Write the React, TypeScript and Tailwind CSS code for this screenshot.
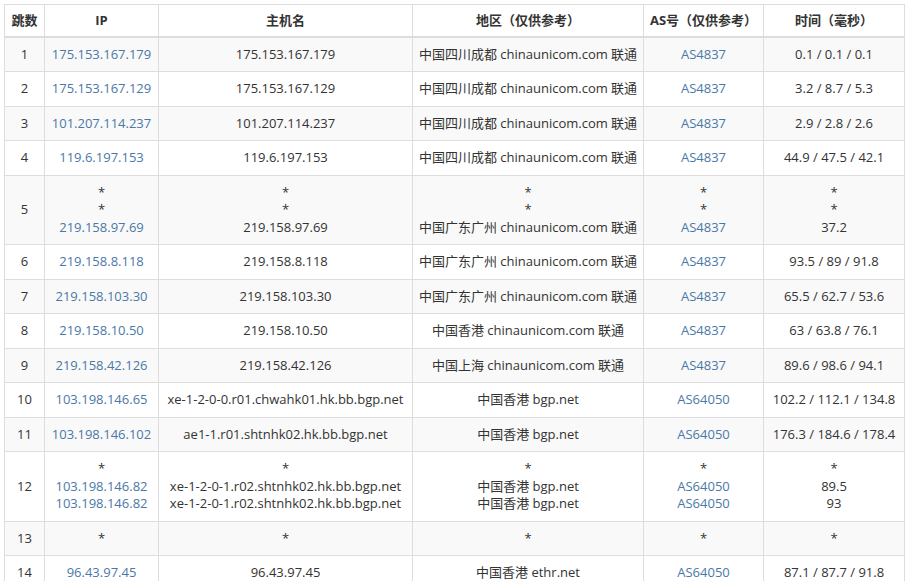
const rows: [string, string[], string[], string[], string[], string[]][] = [
  ["1", ["175.153.167.179"], ["175.153.167.179"], ["中国四川成都 chinaunicom.com 联通"], ["AS4837"], ["0.1 / 0.1 / 0.1"]],
  ["2", ["175.153.167.129"], ["175.153.167.129"], ["中国四川成都 chinaunicom.com 联通"], ["AS4837"], ["3.2 / 8.7 / 5.3"]],
  ["3", ["101.207.114.237"], ["101.207.114.237"], ["中国四川成都 chinaunicom.com 联通"], ["AS4837"], ["2.9 / 2.8 / 2.6"]],
  ["4", ["119.6.197.153"], ["119.6.197.153"], ["中国四川成都 chinaunicom.com 联通"], ["AS4837"], ["44.9 / 47.5 / 42.1"]],
  ["5", ["*", "*", "219.158.97.69"], ["*", "*", "219.158.97.69"], ["*", "*", "中国广东广州 chinaunicom.com 联通"], ["*", "*", "AS4837"], ["*", "*", "37.2"]],
  ["6", ["219.158.8.118"], ["219.158.8.118"], ["中国广东广州 chinaunicom.com 联通"], ["AS4837"], ["93.5 / 89 / 91.8"]],
  ["7", ["219.158.103.30"], ["219.158.103.30"], ["中国广东广州 chinaunicom.com 联通"], ["AS4837"], ["65.5 / 62.7 / 53.6"]],
  ["8", ["219.158.10.50"], ["219.158.10.50"], ["中国香港 chinaunicom.com 联通"], ["AS4837"], ["63 / 63.8 / 76.1"]],
  ["9", ["219.158.42.126"], ["219.158.42.126"], ["中国上海 chinaunicom.com 联通"], ["AS4837"], ["89.6 / 98.6 / 94.1"]],
  ["10", ["103.198.146.65"], ["xe-1-2-0-0.r01.chwahk01.hk.bb.bgp.net"], ["中国香港 bgp.net"], ["AS64050"], ["102.2 / 112.1 / 134.8"]],
  ["11", ["103.198.146.102"], ["ae1-1.r01.shtnhk02.hk.bb.bgp.net"], ["中国香港 bgp.net"], ["AS64050"], ["176.3 / 184.6 / 178.4"]],
  ["12", ["*", "103.198.146.82", "103.198.146.82"], ["*", "xe-1-2-0-1.r02.shtnhk02.hk.bb.bgp.net", "xe-1-2-0-1.r02.shtnhk02.hk.bb.bgp.net"], ["*", "中国香港 bgp.net", "中国香港 bgp.net"], ["*", "AS64050", "AS64050"], ["*", "89.5", "93"]],
  ["13", ["*"], ["*"], ["*"], ["*"], ["*"]],
  ["14", ["96.43.97.45"], ["96.43.97.45"], ["中国香港 ethr.net"], ["AS64050"], ["87.1 / 87.7 / 91.8"]],
]

function Cell({ lines, link }: { lines: string[]; link?: boolean }) {
  return (
    <td className="border border-[#ddd] px-1 py-[8px] text-center align-middle whitespace-nowrap">
      {lines.map((l, i) => (
        <div key={i} className={l !== "*" && link ? "text-[#4a78a8]" : ""}>{l}</div>
      ))}
    </td>
  )
}

export default function App() {
  return (
    <div className="bg-white p-[4px] w-[908px] h-[581px] overflow-hidden" style={{ fontFamily: '"Open Sans", "Noto Sans CJK SC", sans-serif' }}>
      <table className="w-[900px] border-collapse text-[13px] leading-[17.5px] text-[#333] table-fixed">
        <colgroup>
          <col className="w-[40px]" />
          <col className="w-[114px]" />
          <col className="w-[254px]" />
          <col className="w-[231px]" />
          <col className="w-[120px]" />
          <col className="w-[141px]" />
        </colgroup>
        <thead>
          <tr className="h-[32px]">
            {["跳数", "IP", "主机名", "地区（仅供参考）", "AS号（仅供参考）", "时间（毫秒）"].map((h) => (
              <th key={h} className="border border-[#ddd] border-b-2 px-1 font-bold text-center whitespace-nowrap">{h}</th>
            ))}
          </tr>
        </thead>
        <tbody>
          {rows.map((r, i) => (
            <tr key={r[0]} className={i % 2 === 0 ? "bg-[#f9f9f9]" : "bg-white"}>
              <td className="border border-[#ddd] text-center py-[8px]">{r[0]}</td>
              <Cell lines={r[1]} link />
              <Cell lines={r[2]} />
              <Cell lines={r[3]} />
              <Cell lines={r[4]} link />
              <Cell lines={r[5]} />
            </tr>
          ))}
        </tbody>
      </table>
    </div>
  )
}
